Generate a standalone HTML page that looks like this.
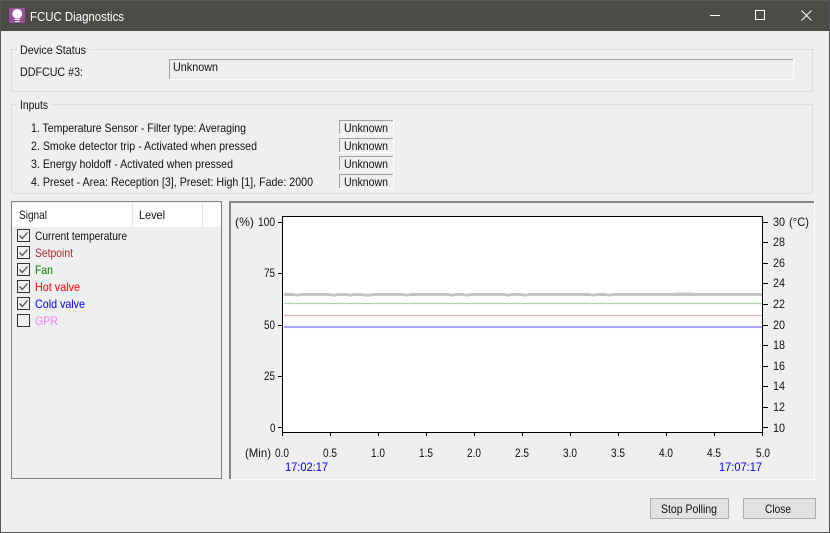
<!DOCTYPE html>
<html><head><meta charset="utf-8"><title>FCUC Diagnostics</title>
<style>
html,body{margin:0;padding:0;width:830px;height:533px;overflow:hidden;background:#efefef}
svg{display:block}
text{font-family:"Liberation Sans",sans-serif;font-size:12px;fill:#111;white-space:pre}
rect,line{shape-rendering:crispEdges}
</style></head><body>
<svg width="830" height="533" viewBox="0 0 830 533" xmlns="http://www.w3.org/2000/svg">
<rect width="830" height="533" fill="#efefef"/>
<!-- title bar -->
<rect width="830" height="31" fill="#4d4b48"/>
<rect width="830" height="1" fill="#5c5b59"/>
<rect x="0" y="0" width="1" height="533" fill="#555"/>
<rect x="829" y="0" width="1" height="533" fill="#555"/>
<rect x="0" y="532" width="830" height="1" fill="#555"/>
<rect x="9" y="8" width="16" height="15" fill="#9b4f9b"/>
<path d="M17.300 9a4.800 4.800 0 0 1 3.200 8.400c-.5.5-.7.9-.8 1.100h-4.800c-.1-.2-.3-.6-.8-1.100A4.800 4.800 0 0 1 17.300 9z" fill="#fff"/>
<rect x="14.500" y="19" width="5.500" height="1" fill="#fff"/><rect x="15" y="21" width="4.500" height="1" fill="#fff"/>
<text x="30" y="21" textLength="94" lengthAdjust="spacingAndGlyphs" style="fill:#fff;font-size:13px">FCUC Diagnostics</text>
<rect x="710" y="15" width="10" height="1" fill="#fff"/>
<rect x="755.500" y="10.500" width="9" height="9" fill="none" stroke="#fff" style="shape-rendering:crispEdges"/>
<path d="M801.500 10.500l10 10M811.500 10.500l-10 10" stroke="#fff" stroke-width="1" fill="none"/>

<!-- Device Status -->
<rect x="11.500" y="49.500" width="801" height="42" fill="none" stroke="#dcdcdc"/>
<rect x="17" y="46" width="73" height="8" fill="#efefef"/>
<text x="20" y="54" textLength="66" lengthAdjust="spacingAndGlyphs">Device Status</text>
<text x="20" y="76" textLength="63" lengthAdjust="spacingAndGlyphs">DDFCUC #3:</text>
<rect x="169" y="59" width="625" height="21" fill="#fff"/>
<rect x="169" y="59" width="624" height="20" fill="#a0a0a0"/>
<rect x="170" y="60" width="623" height="19" fill="#efefef"/>
<text x="173" y="71" textLength="45" lengthAdjust="spacingAndGlyphs">Unknown</text>

<!-- Inputs -->
<rect x="11.500" y="104.500" width="801" height="89" fill="none" stroke="#dcdcdc"/>
<rect x="17" y="100" width="35" height="9" fill="#efefef"/>
<text x="20" y="109" textLength="28" lengthAdjust="spacingAndGlyphs">Inputs</text>
<text x="31" y="132" textLength="215" lengthAdjust="spacingAndGlyphs">1. Temperature Sensor - Filter type: Averaging</text>
<text x="31" y="150" textLength="226" lengthAdjust="spacingAndGlyphs">2. Smoke detector trip - Activated when pressed</text>
<text x="31" y="168" textLength="202" lengthAdjust="spacingAndGlyphs">3. Energy holdoff - Activated when pressed</text>
<text x="31" y="186" textLength="282" lengthAdjust="spacingAndGlyphs">4. Preset - Area: Reception [3], Preset: High [1], Fade: 2000</text>
<g>
<rect x="339" y="120" width="55" height="15" fill="#fff"/><rect x="339" y="120" width="54" height="14" fill="#a0a0a0"/><rect x="340" y="121" width="53" height="13" fill="#efefef"/>
<rect x="339" y="138" width="55" height="15" fill="#fff"/><rect x="339" y="138" width="54" height="14" fill="#a0a0a0"/><rect x="340" y="139" width="53" height="13" fill="#efefef"/>
<rect x="339" y="156" width="55" height="15" fill="#fff"/><rect x="339" y="156" width="54" height="14" fill="#a0a0a0"/><rect x="340" y="157" width="53" height="13" fill="#efefef"/>
<rect x="339" y="174" width="55" height="15" fill="#fff"/><rect x="339" y="174" width="54" height="14" fill="#a0a0a0"/><rect x="340" y="175" width="53" height="13" fill="#efefef"/>
</g>
<text x="344" y="132" textLength="44" lengthAdjust="spacingAndGlyphs">Unknown</text>
<text x="344" y="150" textLength="44" lengthAdjust="spacingAndGlyphs">Unknown</text>
<text x="344" y="168" textLength="44" lengthAdjust="spacingAndGlyphs">Unknown</text>
<text x="344" y="186" textLength="44" lengthAdjust="spacingAndGlyphs">Unknown</text>

<!-- Signal list -->
<rect x="11.500" y="201.500" width="210" height="277" fill="#efefef" stroke="#828282"/>
<rect x="12" y="203" width="209" height="24" fill="#fff"/>
<rect x="132" y="203" width="1" height="24" fill="#e5e5e5"/>
<rect x="202" y="203" width="1" height="24" fill="#e5e5e5"/>
<text x="19" y="219" textLength="28" lengthAdjust="spacingAndGlyphs">Signal</text>
<text x="139" y="219" textLength="26" lengthAdjust="spacingAndGlyphs">Level</text>
<g fill="none" stroke="#333">
<rect x="17.500" y="229.500" width="12" height="12"/>
<rect x="17.500" y="246.500" width="12" height="12"/>
<rect x="17.500" y="263.500" width="12" height="12"/>
<rect x="17.500" y="280.500" width="12" height="12"/>
<rect x="17.500" y="297.500" width="12" height="12"/>
<rect x="17.500" y="314.500" width="12" height="12"/>
</g>
<g fill="none" stroke="#555" stroke-width="1.300">
<path d="M19.500 235.500l2.800 3 5.200-6"/>
<path d="M19.500 252.500l2.800 3 5.200-6"/>
<path d="M19.500 269.500l2.800 3 5.200-6"/>
<path d="M19.500 286.500l2.800 3 5.200-6"/>
<path d="M19.500 303.500l2.800 3 5.200-6"/>
</g>
<text x="35" y="240" textLength="92" lengthAdjust="spacingAndGlyphs">Current temperature</text>
<text x="35" y="257" textLength="38" lengthAdjust="spacingAndGlyphs" style="fill:#a52a2a">Setpoint</text>
<text x="35" y="274" textLength="18" lengthAdjust="spacingAndGlyphs" style="fill:#008000">Fan</text>
<text x="35" y="291" textLength="45" lengthAdjust="spacingAndGlyphs" style="fill:#ff0000">Hot valve</text>
<text x="35" y="308" textLength="50" lengthAdjust="spacingAndGlyphs" style="fill:#0000ff">Cold valve</text>
<text x="35" y="325" textLength="23" lengthAdjust="spacingAndGlyphs" style="fill:#ee82ee">GPR</text>

<!-- Chart panel -->
<rect x="229" y="201" width="586" height="279" fill="#fff"/>
<rect x="229" y="201" width="585" height="278" fill="#efefef"/>
<rect x="229" y="201" width="585" height="2" fill="#828282"/>
<rect x="229" y="201" width="2" height="278" fill="#828282"/>
<rect x="282" y="216" width="481" height="216" fill="#fff"/>
<!-- traces -->
<rect x="284" y="302" width="478" height="3" fill="#f5faf5"/>
<rect x="284" y="303" width="478" height="1" fill="#a8d8a8"/>
<rect x="284" y="314" width="478" height="3" fill="#faf5f5"/>
<rect x="284" y="315" width="478" height="1" fill="#eab0b0"/>
<rect x="284" y="325" width="478" height="4" fill="#f8f8ff"/>
<rect x="284" y="326" width="478" height="2" fill="#a8a8ff"/>
<rect x="676" y="292" width="16" height="1" fill="#f8d4f8"/>
<rect x="284" y="293" width="478" height="3" fill="#c4c4c4"/>
<g fill="#e6e6e6">
<rect x="294" y="293" width="6" height="1"/><rect x="330" y="293" width="7" height="1"/><rect x="347" y="293" width="6" height="1"/><rect x="362" y="293" width="11" height="1"/><rect x="404" y="293" width="6" height="1"/><rect x="449" y="293" width="6" height="1"/><rect x="464" y="293" width="6" height="1"/><rect x="505" y="293" width="6" height="1"/><rect x="522" y="293" width="6" height="1"/><rect x="590" y="293" width="6" height="1"/><rect x="606" y="293" width="6" height="1"/>
</g>
<g fill="#dcdcdc">
<rect x="295" y="296" width="4" height="1"/><rect x="331" y="296" width="5" height="1"/><rect x="348" y="296" width="4" height="1"/><rect x="363" y="296" width="9" height="1"/><rect x="405" y="296" width="4" height="1"/><rect x="450" y="296" width="4" height="1"/><rect x="465" y="296" width="4" height="1"/><rect x="506" y="296" width="4" height="1"/><rect x="523" y="296" width="4" height="1"/><rect x="591" y="296" width="4" height="1"/><rect x="607" y="296" width="4" height="1"/>
</g>
<!-- axes -->
<g fill="#000">
<rect x="282" y="216" width="481" height="1"/>
<rect x="282" y="432" width="481" height="1"/>
<rect x="282" y="216" width="1" height="216"/>
<rect x="762" y="216" width="1" height="216"/>
<rect x="278" y="222" width="4" height="1"/><rect x="278" y="273" width="4" height="1"/><rect x="278" y="325" width="4" height="1"/><rect x="278" y="376" width="4" height="1"/><rect x="278" y="427" width="4" height="1"/>
<rect x="763" y="222" width="5" height="1"/><rect x="763" y="242" width="5" height="1"/><rect x="763" y="263" width="5" height="1"/><rect x="763" y="283" width="5" height="1"/><rect x="763" y="304" width="5" height="1"/><rect x="763" y="325" width="5" height="1"/><rect x="763" y="345" width="5" height="1"/><rect x="763" y="366" width="5" height="1"/><rect x="763" y="386" width="5" height="1"/><rect x="763" y="407" width="5" height="1"/><rect x="763" y="427" width="5" height="1"/>
<rect x="282" y="433" width="1" height="3"/><rect x="330" y="433" width="1" height="3"/><rect x="378" y="433" width="1" height="3"/><rect x="426" y="433" width="1" height="3"/><rect x="474" y="433" width="1" height="3"/><rect x="522" y="433" width="1" height="3"/><rect x="570" y="433" width="1" height="3"/><rect x="618" y="433" width="1" height="3"/><rect x="666" y="433" width="1" height="3"/><rect x="714" y="433" width="1" height="3"/><rect x="762" y="433" width="1" height="3"/>
</g>
<text x="235" y="226" textLength="19" lengthAdjust="spacingAndGlyphs">(%)</text>
<text x="258" y="226" textLength="17" lengthAdjust="spacingAndGlyphs">100</text>
<text x="264" y="277" textLength="11" lengthAdjust="spacingAndGlyphs">75</text>
<text x="264" y="329" textLength="11" lengthAdjust="spacingAndGlyphs">50</text>
<text x="264" y="380" textLength="11" lengthAdjust="spacingAndGlyphs">25</text>
<text x="270" y="432" textLength="5.500" lengthAdjust="spacingAndGlyphs">0</text>
<g>
<text x="773" y="226" textLength="12" lengthAdjust="spacingAndGlyphs">30</text>
<text x="789" y="226" textLength="20" lengthAdjust="spacingAndGlyphs">(°C)</text>
<text x="773" y="246" textLength="12" lengthAdjust="spacingAndGlyphs">28</text>
<text x="773" y="267" textLength="12" lengthAdjust="spacingAndGlyphs">26</text>
<text x="773" y="287" textLength="12" lengthAdjust="spacingAndGlyphs">24</text>
<text x="773" y="308" textLength="12" lengthAdjust="spacingAndGlyphs">22</text>
<text x="773" y="329" textLength="12" lengthAdjust="spacingAndGlyphs">20</text>
<text x="773" y="349" textLength="12" lengthAdjust="spacingAndGlyphs">18</text>
<text x="773" y="370" textLength="12" lengthAdjust="spacingAndGlyphs">16</text>
<text x="773" y="390" textLength="12" lengthAdjust="spacingAndGlyphs">14</text>
<text x="773" y="411" textLength="12" lengthAdjust="spacingAndGlyphs">12</text>
<text x="773" y="432" textLength="12" lengthAdjust="spacingAndGlyphs">10</text>
</g>
<text x="245" y="457" textLength="26" lengthAdjust="spacingAndGlyphs">(Min)</text>
<text x="275" y="457" textLength="14" lengthAdjust="spacingAndGlyphs">0.0</text>
<text x="323" y="457" textLength="14" lengthAdjust="spacingAndGlyphs">0.5</text>
<text x="371" y="457" textLength="14" lengthAdjust="spacingAndGlyphs">1.0</text>
<text x="419" y="457" textLength="14" lengthAdjust="spacingAndGlyphs">1.5</text>
<text x="467" y="457" textLength="14" lengthAdjust="spacingAndGlyphs">2.0</text>
<text x="515" y="457" textLength="14" lengthAdjust="spacingAndGlyphs">2.5</text>
<text x="563" y="457" textLength="14" lengthAdjust="spacingAndGlyphs">3.0</text>
<text x="611" y="457" textLength="14" lengthAdjust="spacingAndGlyphs">3.5</text>
<text x="659" y="457" textLength="14" lengthAdjust="spacingAndGlyphs">4.0</text>
<text x="707" y="457" textLength="14" lengthAdjust="spacingAndGlyphs">4.5</text>
<text x="756" y="457" textLength="14" lengthAdjust="spacingAndGlyphs">5.0</text>
<text x="285" y="471" textLength="43" lengthAdjust="spacingAndGlyphs" style="fill:#0000ff">17:02:17</text>
<text x="719" y="471" textLength="43" lengthAdjust="spacingAndGlyphs" style="fill:#0000ff">17:07:17</text>

<!-- buttons -->
<rect x="650.500" y="498.500" width="78" height="20" fill="#e1e1e1" stroke="#adadad"/>
<rect x="743.500" y="498.500" width="72" height="20" fill="#e1e1e1" stroke="#adadad"/>
<text x="661" y="513" textLength="56" lengthAdjust="spacingAndGlyphs">Stop Polling</text>
<text x="765" y="513" textLength="26" lengthAdjust="spacingAndGlyphs">Close</text>
</svg>
</body></html>
